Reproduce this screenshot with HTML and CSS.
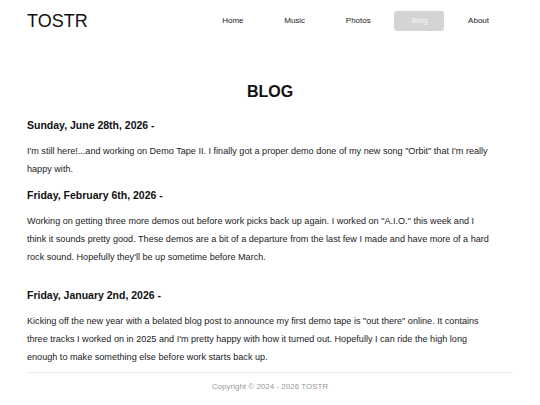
FILE: index.html
```html
<!DOCTYPE html>
<html>
<head>
<meta charset="utf-8">
<link rel="stylesheet" href="styles.css">
</head>
<body>
<div class="page">
  <header class="header">
    <div class="logo">TOSTR</div>
    <nav class="nav">
      <a class="nav-item">Home</a>
      <a class="nav-item">Music</a>
      <a class="nav-item">Photos</a>
      <a class="nav-item active">Blog</a>
      <a class="nav-item">About</a>
    </nav>
  </header>
  <main class="main">
    <h2 class="title">BLOG</h2>
    <h3 class="post-date">Sunday, June 28th, 2026 -</h3>
    <p class="post-text">I'm still here!...and working on Demo Tape II. I finally got a proper demo done of my new song "Orbit" that I'm really happy with.</p>
    <h3 class="post-date">Friday, February 6th, 2026 -</h3>
    <p class="post-text post-gap">Working on getting three more demos out before work picks back up again. I worked on "A.I.O." this week and I think it sounds pretty good. These demos are a bit of a departure from the last few I made and have more of a hard rock sound. Hopefully they'll be up sometime before March.</p>
    <h3 class="post-date">Friday, January 2nd, 2026 -</h3>
    <p class="post-text">Kicking off the new year with a belated blog post to announce my first demo tape is "out there" online. It contains three tracks I worked on in 2025 and I'm pretty happy with how it turned out. Hopefully I can ride the high long enough to make something else before work starts back up.</p>
  </main>
  <footer class="footer">Copyright © 2024 - 2026 TOSTR</footer>
</div>
</body>
</html>
```
FILE: styles.css
```css
html, body {
  margin: 0;
  padding: 0;
  background: #ffffff;
}
body {
  font-family: "Liberation Sans", Arial, sans-serif;
  color: #222222;
}
.page {
  padding: 0 27px;
}
.header {
  height: 42px;
  display: flex;
  align-items: center;
  justify-content: space-between;
}
.logo {
  font-size: 18px;
  line-height: 20px;
  color: #111111;
}
.nav {
  display: flex;
  gap: 6.7px;
  padding-right: 7px;
}
.nav-item {
  display: block;
  font-size: 8px;
  line-height: 20px;
  padding: 0 17px;
  color: #222222;
  border-radius: 3px;
}
.nav-item.active {
  background: #d4d4d4;
  color: #f4f4f4;
}
.main {
  padding-top: 40px;
}
.title {
  margin: 0 0 16px;
  text-align: center;
  font-size: 16px;
  line-height: 20px;
  font-weight: bold;
  color: #111111;
}
.post-date {
  margin: 0;
  font-size: 10.5px;
  line-height: 14px;
  font-weight: bold;
  color: #111111;
}
.post-text {
  margin: 10px 0;
  padding-right: 18px;
  font-size: 9.1px;
  line-height: 18px;
}
.post-gap {
  margin-bottom: 22px;
}
.main .post-text:last-child {
  margin-bottom: 6px;
}
.footer {
  border-top: 1px solid #e6e6e6;
  padding-top: 9px;
  text-align: center;
  font-size: 8px;
  line-height: 10px;
  color: #9a9a9a;
}
```
